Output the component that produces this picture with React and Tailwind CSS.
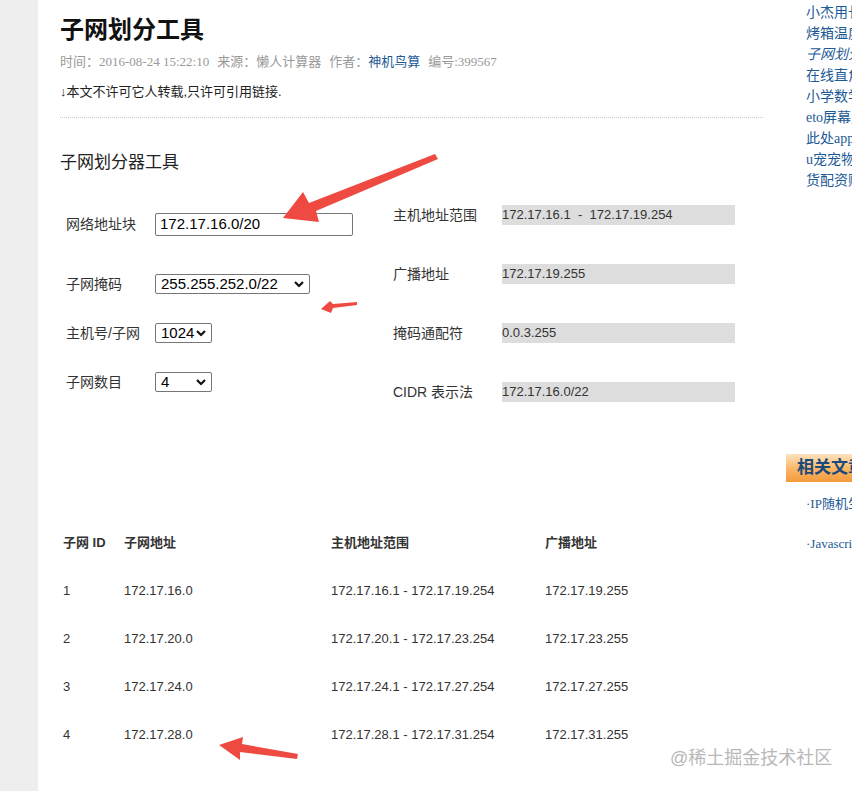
const sans = { fontFamily: '"Liberation Sans", "Noto Sans CJK SC", sans-serif' };
const serif = { fontFamily: '"Liberation Serif", "Noto Sans CJK SC", serif' };

const Chevron = () => (
  <svg className="pointer-events-none absolute right-[6px] top-1/2 -translate-y-1/2" width="10" height="7" viewBox="0 0 10 7">
    <path d="M1 1.5 L5 5.5 L9 1.5" fill="none" stroke="#111" strokeWidth="2.2" />
  </svg>
);

const Select = ({ value, width }) => (
  <div className={`relative h-[20px] ${width}`}>
    <div className="flex h-full items-center rounded-[2px] border border-[#767676] bg-white pl-[5px] text-[15px] text-black">
      {value}
    </div>
    <Chevron />
  </div>
);

const sideLinks = [
  { t: "小杰用长期贷款" },
  { t: "烤箱温度转换" },
  { t: "子网划分工具", italic: true },
  { t: "在线直角三角形" },
  { t: "小学数学公式" },
  { t: "eto屏幕尺寸" },
  { t: "此处app下载" },
  { t: "u宠宠物年龄" },
  { t: "货配资赚钱" },
];

const results = [
  { label: "主机地址范围", value: "172.17.16.1  -  172.17.19.254", mt: "mt-[28px]" },
  { label: "广播地址", value: "172.17.19.255", mt: "mt-[35px]" },
  { label: "掩码通配符", value: "0.0.3.255", mt: "mt-[35px]" },
  { label: "CIDR 表示法", value: "172.17.16.0/22", mt: "mt-[35px]" },
];

const rows = [
  ["1", "172.17.16.0", "172.17.16.1 - 172.17.19.254", "172.17.19.255"],
  ["2", "172.17.20.0", "172.17.20.1 - 172.17.23.254", "172.17.23.255"],
  ["3", "172.17.24.0", "172.17.24.1 - 172.17.27.254", "172.17.27.255"],
  ["4", "172.17.28.0", "172.17.28.1 - 172.17.31.254", "172.17.31.255"],
];

export default function App() {
  return (
    <div className="relative flex h-[791px] w-[852px] overflow-hidden bg-white" style={sans}>
      {/* left strip */}
      <div className="w-[38px] shrink-0 bg-[#eeeeee]" />

      {/* main column */}
      <main className="w-[748px] shrink-0 pl-[22px] pr-[23px]">
        <h1 className="pt-[14px] text-[24px] font-bold leading-[32px] text-[#111]">子网划分工具</h1>
        <div className="mt-[6px] flex h-[20px] items-center text-[13px] text-[#999]">
          <span>时间：</span>
          <span style={serif}>2016-08-24 15:22:10</span>
          <span className="ml-[8px]">来源：懒人计算器</span>
          <span className="ml-[8px]">作者：</span>
          <span className="text-[#1c5a96]">神机鸟算</span>
          <span className="ml-[8px]">编号</span>
          <span style={serif}>:399567</span>
        </div>
        <p className="mt-[10px] h-[20px] text-[13px] leading-[20px] text-[#222]">↓本文不许可它人转载,只许可引用链接.</p>
        <div className="mt-[15px] border-t border-dotted border-[#c8c8c8]" />

        <h2 className="mt-[33px] text-[17px] leading-[24px] text-[#222]">子网划分器工具</h2>

        {/* form */}
        <div className="flex items-start text-[14px] text-[#333]">
          <div className="w-[333px] shrink-0 pl-[6px]">
            <div className="mt-[37px] flex h-[24px] items-center">
              <span className="w-[89px]">网络地址块</span>
              <div className="flex h-[23px] w-[198px] items-center rounded-[2px] border border-[#767676] pl-[4px] text-[15px] text-black">
                172.17.16.0/20
              </div>
            </div>
            <div className="mt-[36px] flex h-[24px] items-center">
              <span className="w-[89px]">子网掩码</span>
              <Select value="255.255.252.0/22" width="w-[155px]" />
            </div>
            <div className="mt-[25px] flex h-[24px] items-center">
              <span className="w-[89px]">主机号/子网</span>
              <Select value="1024" width="w-[57px]" />
            </div>
            <div className="mt-[25px] flex h-[24px] items-center">
              <span className="w-[89px]">子网数目</span>
              <Select value="4" width="w-[57px]" />
            </div>
          </div>

          <div className="flex-1">
            {results.map((r) => (
              <div key={r.label} className={`${r.mt} flex h-[24px] items-center`}>
                <span className="w-[109px]">{r.label}</span>
                <div className="flex h-[20px] w-[233px] items-center bg-[#dddddd] text-[13px] text-[#333] whitespace-pre">
                  {r.value}
                </div>
              </div>
            ))}
          </div>
        </div>

        {/* result table */}
        <div className="mt-[115px] text-[13px] text-[#333]">
          <div className="grid h-[48px] grid-cols-[64px_207px_214px_1fr] items-center font-bold">
            <span className="pl-[3px]">子网 ID</span>
            <span>子网地址</span>
            <span>主机地址范围</span>
            <span>广播地址</span>
          </div>
          {rows.map((r) => (
            <div key={r[0]} className="grid h-[48px] grid-cols-[64px_207px_214px_1fr] items-center">
              <span className="pl-[3px]">{r[0]}</span>
              <span>{r[1]}</span>
              <span>{r[2]}</span>
              <span>{r[3]}</span>
            </div>
          ))}
        </div>
      </main>

      {/* sidebar */}
      <aside className="w-[66px] shrink-0 overflow-hidden">
        <ul className="mt-[2px] pl-[20px] text-[14px] leading-[21px] text-[#1c5a96]" style={serif}>
          {sideLinks.map((l) => (
            <li key={l.t} className={`whitespace-nowrap ${l.italic ? "italic" : ""}`}>{l.t}</li>
          ))}
        </ul>
        <div className="mt-[263px] flex h-[28px] w-[120px] items-center bg-gradient-to-b from-[#fde3c0] via-[#f9b768] to-[#f39a3a] pl-[11px] text-[17px] font-bold whitespace-nowrap text-[#1a4a7c]">
          相关文章
        </div>
        <div className="mt-[12px] pl-[20px] text-[13px] leading-[20px] whitespace-nowrap text-[#1c5a96]" style={serif}>
          <p>·IP随机生成器</p>
          <p className="mt-[20px]">·Javascript</p>
        </div>
      </aside>

      {/* annotation arrows */}
      <svg className="pointer-events-none absolute left-0 top-0" width="852" height="791">
        <polygon points="435,154 438,159 316,211 319,222 283,218 303,192 309,203" fill="#ef4a42" />
        <polygon points="357,302 357,305 333,308 331,313 321,309 330,301 333,304" fill="#ef4a42" />
        <polygon points="219,745 243,737 242,744 298,754 297,759 240,752 240,760" fill="#ef4a42" />
      </svg>

      {/* watermark */}
      <div className="pointer-events-none absolute left-[670px] top-[747px] text-[18px] leading-[22px] whitespace-nowrap text-[#b8b8b8]">
        @稀土掘金技术社区
      </div>
    </div>
  );
}
